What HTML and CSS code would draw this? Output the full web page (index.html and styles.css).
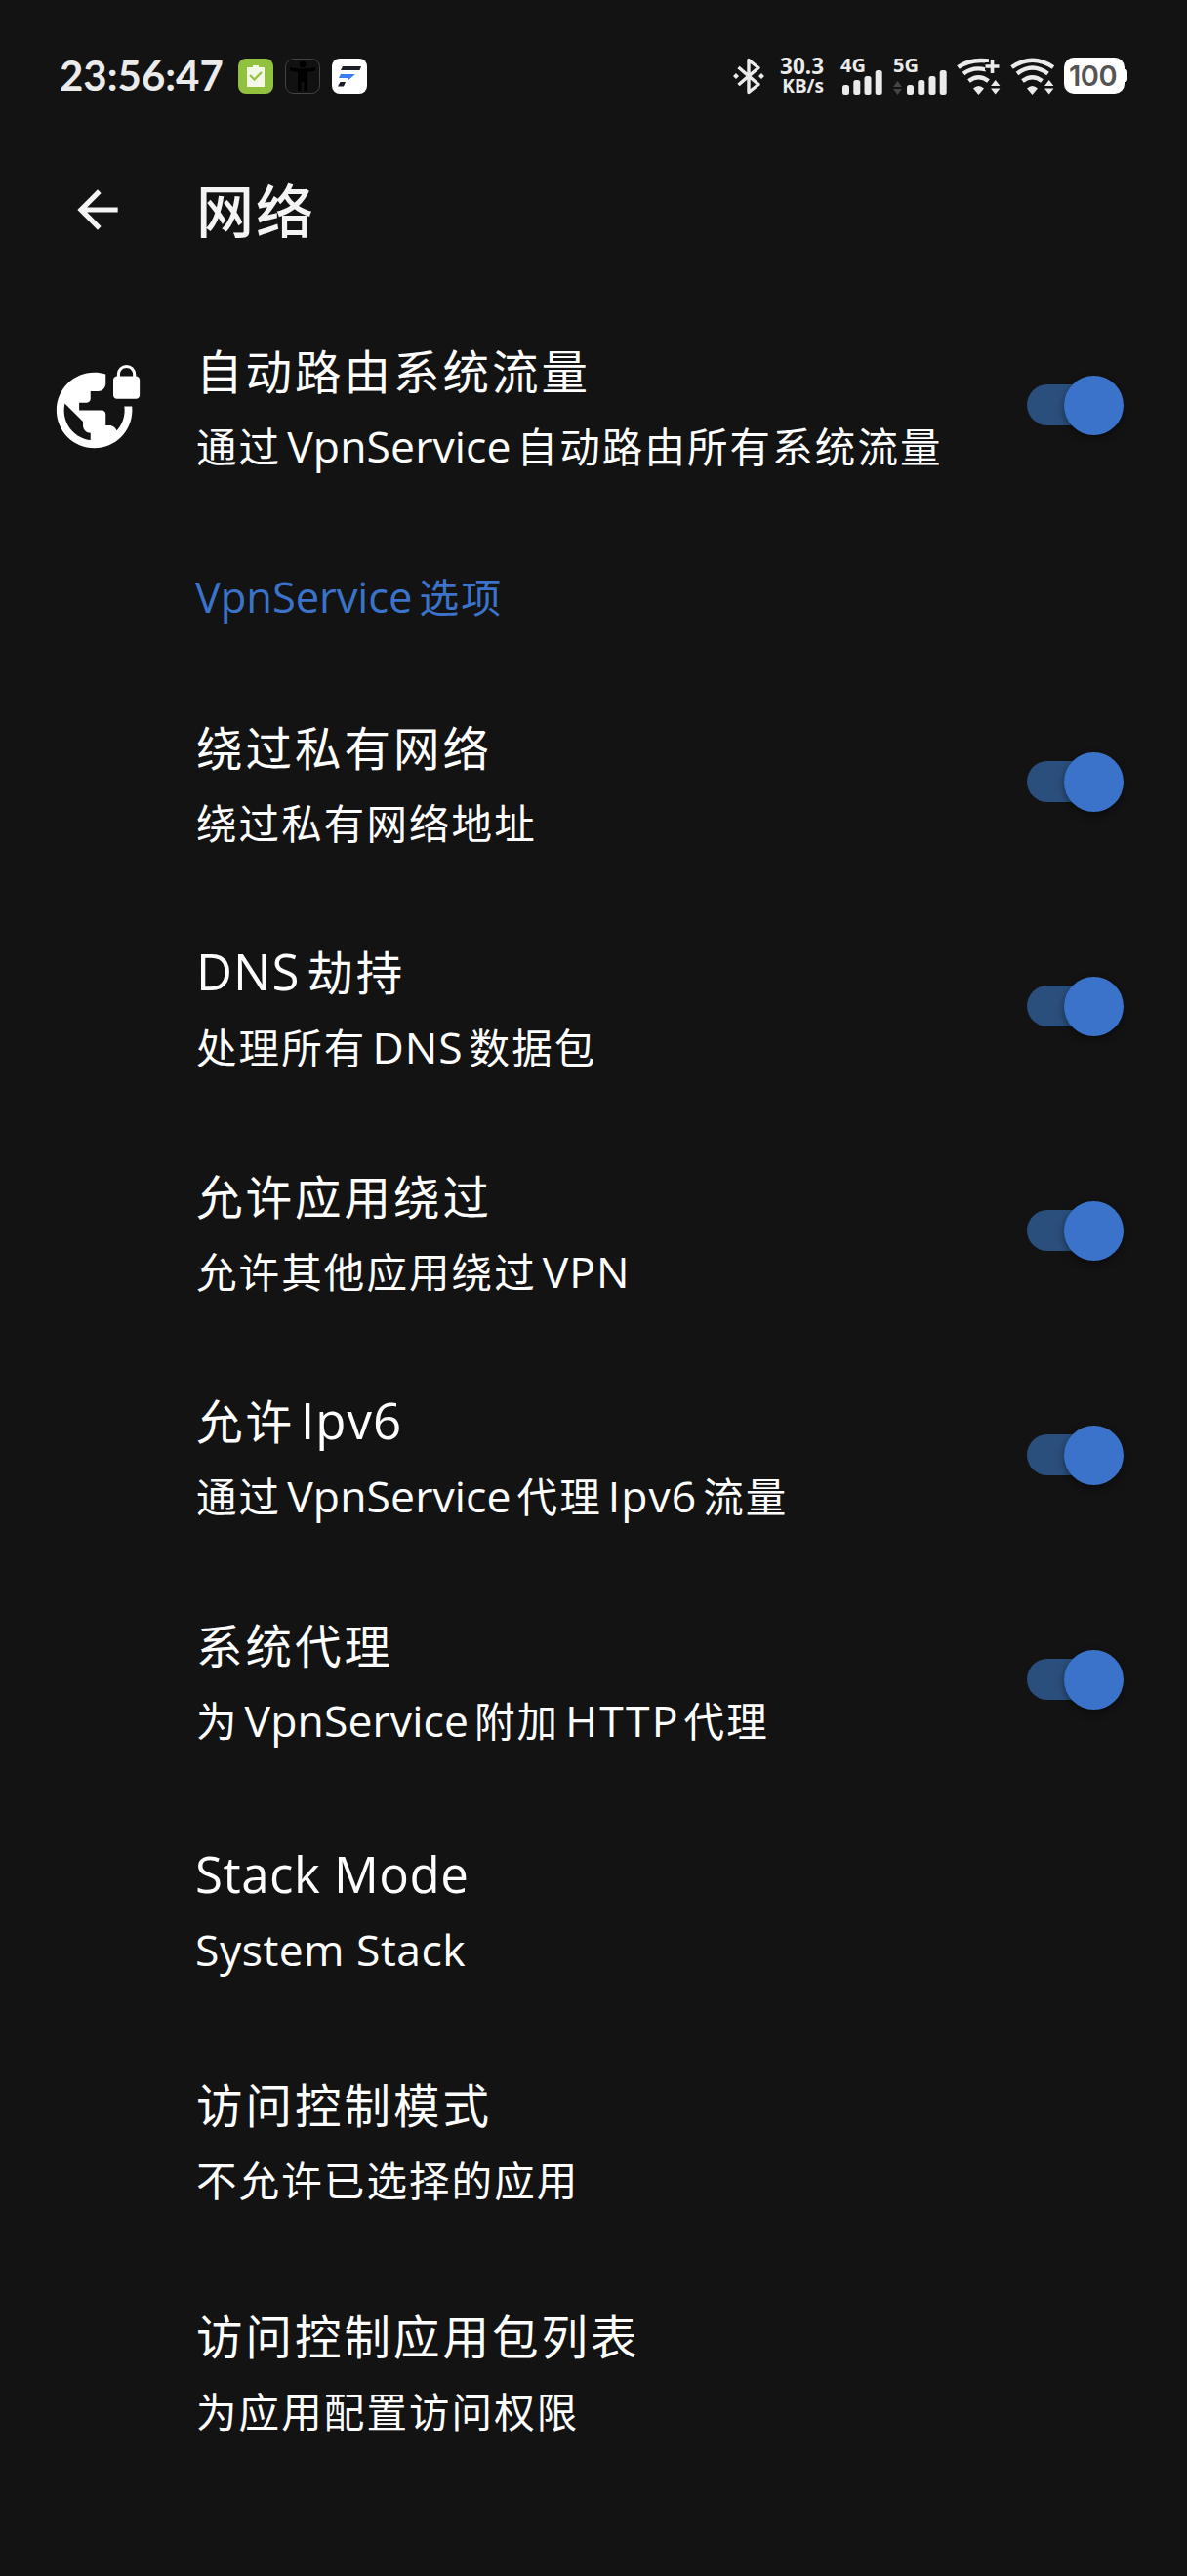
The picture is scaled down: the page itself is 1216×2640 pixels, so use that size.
FILE: index.html
```html
<!DOCTYPE html>
<html lang="zh-CN">
<head>
<meta charset="utf-8">
<title>网络</title>
<link rel="stylesheet" href="styles.css">
</head>
<body>
<header class="status">
  <div class="clock">23:56:47</div>
  <div class="apps">
    <svg class="app" viewBox="0 0 36 36"><rect width="36" height="36" rx="8" fill="#91c13e"/><path d="M9 9h6V7h6v2h6v20H9z" fill="#f3f9e6"/><path d="M12 17l4.500 4.500L24 14" fill="none" stroke="#91c13e" stroke-width="2.200"/></svg>
    <svg class="app" viewBox="0 0 36 36"><rect x=".5" y=".5" width="35" height="35" rx="8" fill="#111" stroke="#444"/><circle cx="18" cy="6" r="3.200" fill="#000"/><path d="M5 9q13 3 26 0v3.500l-8 1.500v19h-3.500v-9h-3v9H13V14l-8-1.500z" fill="#000"/></svg>
    <svg class="app" viewBox="0 0 36 36"><rect width="36" height="36" rx="8" fill="#fff"/><path d="M11 8h19l-1.500 4H9z" fill="#1b1e27"/><path d="M9 16h15l-7 6-1-2H7z" fill="#3b7cf0"/><path d="M8.500 24H14l-2 4.500H6z" fill="#1b1e27"/></svg>
  </div>
  <div class="indicators">
    <svg class="bt" viewBox="0 0 32 38"><path d="M5.500 10L26 27.500 16 35.500V2.500l10 8L5.500 28" fill="none" stroke="#ebebeb" stroke-width="3.400" stroke-linejoin="round"/><path d="M3 16l3 3-3 3-3-3zM29 16l3 3-3 3-3-3z" fill="#ebebeb"/></svg>
    <div class="speed"><span class="rate">30.3</span><span class="unit">KB/s</span></div>
    <div class="cell"><span class="gen">4G</span>
      <svg class="bars" viewBox="0 0 54 26"><g fill="#ebebeb"><rect x="11" y="16" width="7" height="10" rx="2.500"/><rect x="22.300" y="11" width="7" height="15" rx="2.500"/><rect x="33.500" y="7" width="7" height="19" rx="2.500"/><rect x="44.700" y="1" width="7" height="25" rx="2.500"/></g></svg>
    </div>
    <div class="cell cell-5g"><span class="gen">5G</span>
      <svg class="bars" viewBox="0 0 54 26"><path d="M-3 18l4.500-6L6 18zM-3 20h9l-4.500 6z" fill="#444"/><g fill="#ebebeb"><rect x="11" y="16" width="7" height="10" rx="2.500"/><rect x="22.300" y="11" width="7" height="15" rx="2.500"/><rect x="33.500" y="7" width="7" height="19" rx="2.500"/><rect x="44.700" y="1" width="7" height="25" rx="2.500"/></g></svg>
    </div>
    <svg class="wifi" viewBox="0 0 46 38"><g fill="none" stroke="#ebebeb" stroke-width="4.400"><path d="M1.500 10Q14 1 33 3.500"/><path d="M7 16.500Q17 9 30 12.500"/><path d="M12.500 24Q22.500 16.500 32.500 24"/></g><path d="M17 31.500q5.500-5 11 0L22.500 38z" fill="#ebebeb"/><path d="M37 1v16M29 9h16" stroke="#131313" stroke-width="8"/><path d="M36.500 2v14M29.500 9h14" stroke="#ebebeb" stroke-width="3.600"/><path d="M35 29l4.700-6 4.700 6zM35 31.500h9.400L39.700 37.500z" fill="#ebebeb"/></svg>
    <svg class="wifi wifi-2" viewBox="0 0 46 38"><g fill="none" stroke="#ebebeb" stroke-width="4.400"><path d="M1.500 10Q22.500-4.500 44 10"/><path d="M7 16.500Q22.500 4.500 38.500 16.500"/><path d="M12.500 24Q22.500 16.500 32.500 24"/></g><path d="M17 31.500q5.500-5 11 0L22.500 38z" fill="#ebebeb"/><path d="M35 29l4.700-6 4.700 6zM35 31.500h9.400L39.700 37.500z" fill="#ebebeb"/></svg>
    <div class="battery">100</div><div class="nub"></div>
  </div>
</header>

<nav class="toolbar">
  <svg class="back" viewBox="0 0 24 24"><path d="M20 11H7.830l5.590-5.590L12 4l-8 8 8 8 1.410-1.410L7.830 13H20v-2z" fill="#f4f4f4"/></svg>
  <h1 class="heading">网络</h1>
</nav>

<main>
  <div class="row">
    <svg class="vpn" viewBox="0 0 24 24"><path fill="#fff" d="M22 4v-.5a2.500 2.500 0 0 0-5 0V4c-.55 0-1 .45-1 1v4c0 .55.45 1 1 1h5c.55 0 1-.45 1-1V5c0-.55-.45-1-1-1zm-.8 0h-3.400v-.5c0-.94.76-1.700 1.700-1.700s1.700.76 1.700 1.700V4zm-2.280 8c.04.33.08.66.08 1 0 2.080-.8 3.970-2.100 5.390-.26-.81-1-1.390-1.900-1.390h-1v-3c0-.55-.45-1-1-1H7v-2h2c.55 0 1-.45 1-1V8h2c1.100 0 2-.9 2-2V3.460c-.95-.3-1.950-.46-3-.46C5.480 3 1 7.480 1 13s4.480 10 10 10 10-4.480 10-10c0-.34-.02-.67-.05-1h-2.030zM10 20.930c-3.950-.49-7-3.850-7-7.930 0-.62.08-1.210.21-1.790L8 16v1c0 1.100.9 2 2 2v1.930z"/></svg>
    <div class="text"><div class="title">自动路由系统流量</div><div class="sub">通过<span class="en mid">VpnService</span>自动路由所有系统流量</div></div>
    <div class="switch"><div class="thumb"></div></div>
  </div>
  <h2 class="section"><span class="en lead">VpnService</span>选项</h2>
  <div class="row">
    <div class="text"><div class="title">绕过私有网络</div><div class="sub">绕过私有网络地址</div></div>
    <div class="switch"><div class="thumb"></div></div>
  </div>
  <div class="row">
    <div class="text"><div class="title"><span class="en caps lead">DNS</span>劫持</div><div class="sub">处理所有<span class="en caps mid">DNS</span>数据包</div></div>
    <div class="switch"><div class="thumb"></div></div>
  </div>
  <div class="row">
    <div class="text"><div class="title">允许应用绕过</div><div class="sub">允许其他应用绕过<span class="en caps mid">VPN</span></div></div>
    <div class="switch"><div class="thumb"></div></div>
  </div>
  <div class="row">
    <div class="text"><div class="title">允许<span class="en ip mid">Ipv6</span></div><div class="sub">通过<span class="en mid">VpnService</span>代理<span class="en ip mid">Ipv6</span>流量</div></div>
    <div class="switch"><div class="thumb"></div></div>
  </div>
  <div class="row">
    <div class="text"><div class="title">系统代理</div><div class="sub">为<span class="en mid">VpnService</span>附加<span class="en caps wide mid">HTTP</span>代理</div></div>
    <div class="switch"><div class="thumb"></div></div>
  </div>
  <div class="row plain latin">
    <div class="text"><div class="title"><span class="en words">Stack Mode</span></div><div class="sub"><span class="en words">System Stack</span></div></div>
  </div>
  <div class="row plain">
    <div class="text"><div class="title">访问控制模式</div><div class="sub">不允许已选择的应用</div></div>
  </div>
  <div class="row plain">
    <div class="text"><div class="title">访问控制应用包列表</div><div class="sub">为应用配置访问权限</div></div>
  </div>
</main>
</body>
</html>
```
FILE: styles.css
```css
* { box-sizing: border-box; }
body {
  margin: 0;
  width: 1216px;
  height: 2640px;
  overflow: hidden;
  background: #131313;
  color: #fff;
  font-family: "Noto Sans CJK SC", sans-serif;
}
svg { display: block; flex: none; overflow: visible; }

/* status bar */
.status {
  display: flex;
  height: 156px;
  padding: 59px 61px 0 61px;
  color: #ebebeb;
}
.clock {
  width: 183px;
  font: 700 42px/37px Lato, sans-serif;
  white-space: nowrap;
}
.apps { display: flex; gap: 12px; padding-top: 1px; }
.app { width: 36px; height: 36px; }
.indicators {
  display: flex;
  margin-left: auto;
  height: 38px;
  font-family: "Noto Sans", sans-serif;
  font-weight: 700;
}
.bt { width: 32px; height: 38px; }
.speed {
  display: flex;
  flex-direction: column;
  align-items: flex-end;
  width: 61px;
}
.rate { font-size: 22.500px; line-height: 17px; }
.unit { font-size: 19px; line-height: 25px; }
.cell { width: 54px; margin-left: 8px; }
.gen {
  display: block;
  height: 12px;
  padding-left: 9px;
  font-size: 20px;
  line-height: 16px;
}
.cell .bars { width: 54px; height: 26px; }
.cell-5g { margin-left: 12px; }
.cell-5g .gen { margin-left: -12px; }
.wifi { width: 46px; height: 38px; margin-left: 8px; }
.wifi-2 { margin-left: 9px; }
.battery {
  width: 62px;
  height: 37px;
  margin-left: 9px;
  padding-right: 3px;
  border-radius: 10px;
  background: #fff;
  color: #555;
  font: 600 29px/38px Inter, sans-serif;
  letter-spacing: -.5px;
  text-align: center;
}
.nub {
  width: 3px;
  height: 13px;
  margin-top: 12px;
  border-radius: 0 3px 3px 0;
  background: #fff;
}

/* toolbar */
.toolbar {
  display: flex;
  align-items: center;
  height: 118px;
  padding-left: 69px;
}
.back { width: 62px; height: 62px; }
.heading {
  margin: -2px 0 0 70px;
  font-size: 59px;
  font-weight: 500;
  line-height: 80px;
  letter-spacing: 2px;
  color: #f4f4f4;
}

/* preference list */
main { padding-top: 26px; }
.row {
  display: flex;
  align-items: center;
  height: 230px;
  padding: 0 64px 0 200px;
}
.row.plain { height: 237px; }
.vpn { width: 93px; height: 93px; margin: 2px 53px 0 -146px; }
.text { flex: 1; padding: 4px 0 0 1px; white-space: nowrap; }
.latin .text { padding: 6px 0 0; }
.title {
  height: 77px;
  font-size: 47.500px;
  line-height: 77px;
  letter-spacing: 3px;
}
.sub {
  height: 77px;
  font-size: 41.500px;
  line-height: 78px;
  letter-spacing: 2.100px;
}
.en {
  font-family: "Open Sans", sans-serif;
  letter-spacing: 0;
}
.title .en { font-size: 51px; }
.sub .en { font-size: 44.500px; letter-spacing: .1px; }
.mid { margin: 0 6px; }
.lead { margin-right: 7px; }
.title .caps, .sub .caps { letter-spacing: 1px; }
.sub .wide { letter-spacing: 2.200px; margin-right: 4px; }
.title .ip, .sub .ip { letter-spacing: 1px; }
.title .words, .sub .words { letter-spacing: .5px; }
.section {
  height: 156px;
  margin: 0;
  padding-left: 200px;
  font-size: 41px;
  font-weight: 400;
  line-height: 160px;
  letter-spacing: 2px;
  color: #3a73c9;
}
.section .en { font-size: 43.500px; }
.section .lead { letter-spacing: -.1px; }

.switch {
  display: flex;
  align-items: center;
  justify-content: flex-end;
  width: 84px;
  height: 42px;
  margin-right: 16px;
  border-radius: 21px;
  background: #2b4f7d;
}
.thumb {
  flex: none;
  width: 61px;
  height: 61px;
  margin-right: -15px;
  border-radius: 50%;
  background: #3a73c9;
  box-shadow: 0 3px 8px rgba(0, 0, 0, .45);
}
```
